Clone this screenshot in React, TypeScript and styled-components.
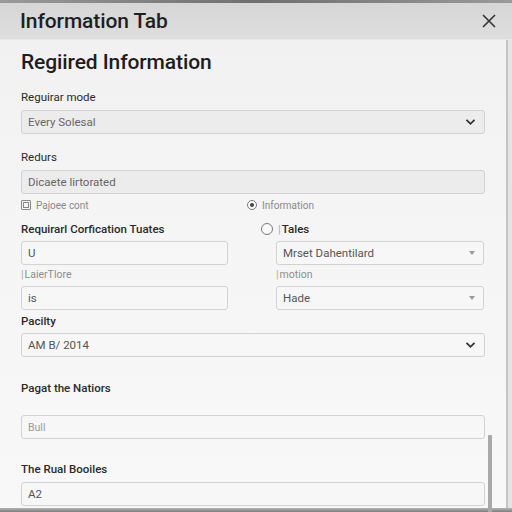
import React, { ReactElement } from 'react'
import styled, { createGlobalStyle } from 'styled-components'

const GlobalStyle = createGlobalStyle`
  html, body {
    margin: 0;
    padding: 0;
    background: #e6e6e6;
  }
  * { box-sizing: border-box; }
`

const Frame = styled.div`
  width: 512px;
  height: 512px;
  overflow: hidden;
  position: relative;
  display: flex;
  flex-direction: column;
  font-family: Roboto, "Liberation Sans", sans-serif;
  background: #ebebeb;
`

const TopEdge = styled.div`
  height: 3px;
  background: linear-gradient(90deg, #9a9a9a, #6f6f6f 50%, #9a9a9a);
`

const BottomEdge = styled.div`
  height: 4px;
  background: linear-gradient(180deg, #b5b5b5, #7d7d7d);
`

const Header = styled.div`
  height: 37px;
  display: flex;
  align-items: center;
  justify-content: space-between;
  padding: 0 14px 0 20px;
  background: linear-gradient(180deg, #d6d6d6, #dedede);
  border-bottom: 1px solid #e8e8e8;
`

const Title = styled.h1`
  margin: 0;
  font-size: 21px;
  font-weight: 500;
  color: #1f1f1f;
  letter-spacing: -0.1px;
`

const CloseButton = styled.button`
  border: none;
  background: none;
  padding: 0;
  width: 18px;
  height: 18px;
  display: flex;
  align-items: center;
  justify-content: center;
  color: #333;
`

const Body = styled.div`
  flex: 1;
  display: flex;
  position: relative;
  min-height: 0;
`

const Content = styled.div`
  width: 506px;
  padding: 0 21px;
  background: linear-gradient(180deg, #f1f1f1 0%, #f5f5f5 40%, #f8f8f8 100%);
`

const Edge = styled.div`
  width: 2px;
  background: #c4c4c4;
`

const Gutter = styled.div`
  flex: 1;
  background: #e4e4e4;
`

const ScrollThumb = styled.div`
  position: absolute;
  left: 488px;
  top: 395px;
  width: 4px;
  height: 80px;
  background: #a9a9a9;
  border-radius: 1px;
`

const Heading = styled.h2`
  margin: 10px 0 0;
  height: 24px;
  line-height: 24px;
  font-size: 21px;
  font-weight: 500;
  color: #1d1d1d;
  letter-spacing: -0.1px;
`

const Label = styled.div<{ $top: number; $bold?: boolean; $light?: boolean }>`
  margin-top: ${p => p.$top}px;
  height: 14px;
  line-height: 14px;
  font-size: ${p => (p.$light ? 10.5 : 11.5)}px;
  font-weight: ${p => (p.$bold ? 500 : 400)};
  color: ${p => (p.$light ? '#8d8d8d' : '#2a2a2a')};
  white-space: nowrap;
`

const Control = styled.div<{ $top: number; $tint?: boolean }>`
  margin-top: ${p => p.$top}px;
  height: 24px;
  display: flex;
  align-items: center;
  justify-content: space-between;
  padding: 0 8px 0 6px;
  border: 1px solid #d2d2d2;
  border-radius: 3px;
  background: ${p => (p.$tint ? '#ececec' : '#f7f7f7')};
  font-size: 11.5px;
  color: ${p => (p.$tint ? '#666' : '#555')};
`

const Placeholder = styled.span`
  color: #9a9a9a;
  font-size: 10.5px;
`

const OptionRow = styled.div`
  margin-top: 4px;
  height: 14px;
  display: flex;
  align-items: center;
  font-size: 10px;
  color: #8a8a8a;
`

const Option = styled.div<{ $width?: number }>`
  display: flex;
  align-items: center;
  gap: 5px;
  width: ${p => (p.$width ? `${p.$width}px` : 'auto')};
`

const Radio = styled.span<{ $checked?: boolean; $size?: number }>`
  width: ${p => p.$size ?? 10}px;
  height: ${p => p.$size ?? 10}px;
  border-radius: 50%;
  border: 1px solid #7a7a7a;
  display: inline-flex;
  align-items: center;
  justify-content: center;
  background: #fafafa;
  &::after {
    content: '';
    width: 4px;
    height: 4px;
    border-radius: 50%;
    background: ${p => (p.$checked ? '#444' : 'transparent')};
  }
`

const Check = styled.span`
  width: 10px;
  height: 10px;
  border: 1px solid #8a8a8a;
  border-radius: 1px;
  display: inline-flex;
  align-items: center;
  justify-content: center;
  &::after {
    content: '';
    width: 4px;
    height: 4px;
    border: 1px solid #888;
  }
`

const SectionRow = styled.div`
  margin-top: 10px;
  height: 14px;
  display: flex;
  align-items: center;
`

const Columns = styled.div`
  display: grid;
  grid-template-columns: 207px 208px;
  column-gap: 48px;
`

const Column = styled.div`
  display: flex;
  flex-direction: column;
`

const Bar = styled.span`
  color: #aaa;
  font-weight: 400;
  margin-right: 1px;
`

const Chevron = (): ReactElement => (
  <svg width="11" height="8" viewBox="0 0 11 8">
    <path d="M1.5 1.8 L5.5 5.8 L9.5 1.8" fill="none" stroke="#333" strokeWidth="1.8" />
  </svg>
)

const Caret = (): ReactElement => (
  <svg width="6" height="4" viewBox="0 0 6 4">
    <path d="M0 0 L6 0 L3 4 Z" fill="#999" />
  </svg>
)

export default function App(): ReactElement {
  return (
    <Frame>
      <GlobalStyle />
      <TopEdge />
      <Header>
        <Title>Information Tab</Title>
        <CloseButton>
          <svg width="16" height="16" viewBox="0 0 16 16">
            <path d="M2 2 L14 14 M14 2 L2 14" stroke="#333" strokeWidth="1.6" />
          </svg>
        </CloseButton>
      </Header>
      <Body>
        <Content>
          <Heading>Regiired Information</Heading>

          <Label $top={16}>Reguirar mode</Label>
          <Control $top={6} $tint>
            <span>Every Solesal</span>
            <Chevron />
          </Control>

          <Label $top={16}>Redurs</Label>
          <Control $top={6} $tint>
            <span>Dicaete lirtorated</span>
          </Control>

          <OptionRow>
            <Option $width={226}>
              <Check />
              <span>Pajoee cont</span>
            </Option>
            <Option>
              <Radio $checked />
              <span>Information</span>
            </Option>
          </OptionRow>

          <SectionRow>
            <Label $top={0} $bold style={{ width: 240 }}>Requirarl Corfication Tuates</Label>
            <Option>
              <Radio $size={12} />
              <Label $top={0} $bold><Bar>|</Bar>Tales</Label>
            </Option>
          </SectionRow>

          <Columns>
            <Column>
              <Control $top={5}><span>U</span></Control>
              <Label $top={3} $light><Bar>|</Bar>LaierTlore</Label>
              <Control $top={4}><span>is</span></Control>
            </Column>
            <Column>
              <Control $top={5}>
                <span>Mrset Dahentilard</span>
                <Caret />
              </Control>
              <Label $top={3} $light><Bar>|</Bar>motion</Label>
              <Control $top={4}>
                <span>Hade</span>
                <Caret />
              </Control>
            </Column>
          </Columns>

          <Label $top={4} $bold>Pacilty</Label>
          <Control $top={5}>
            <span>AM B/ 2014</span>
            <Chevron />
          </Control>

          <Label $top={24} $bold>Pagat the Natiors</Label>
          <Control $top={20}>
            <Placeholder>Bull</Placeholder>
          </Control>

          <Label $top={23} $bold>The Rual Booiles</Label>
          <Control $top={6}>
            <span>A2</span>
          </Control>
        </Content>
        <Edge />
        <Gutter />
        <ScrollThumb />
      </Body>
      <BottomEdge />
    </Frame>
  )
}
